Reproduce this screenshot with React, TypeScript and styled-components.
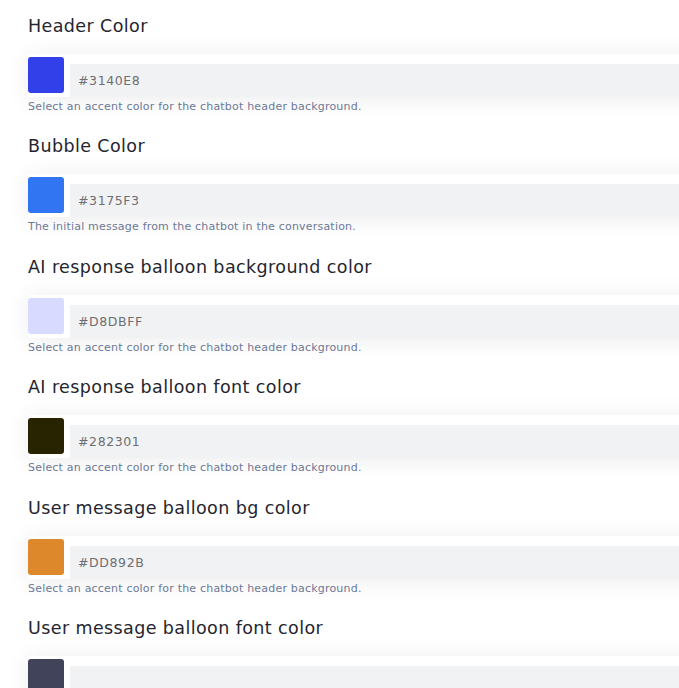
import React from "react";
import styled, { createGlobalStyle } from "styled-components";

const Global = createGlobalStyle`
  html, body { margin: 0; padding: 0; background: #ffffff; }
  body { overflow: hidden; font-family: "DejaVu Sans", "Open Sans", sans-serif; }
`;

const Page = styled.div`
  width: 679px;
  height: 688px;
  overflow: hidden;
  padding: 14px 0 0 28px;
  box-sizing: border-box;
  display: flex;
  flex-direction: column;
`;

const Field = styled.section`
  display: flex;
  flex-direction: column;
  margin-bottom: 19.4px;
`;

const Label = styled.div`
  font-size: 17.5px;
  line-height: 24px;
  letter-spacing: 0.4px;
  color: #25252f;
  font-weight: 400;
`;

const Card = styled.div`
  margin-top: 16px;
  height: 43px;
  width: calc(100% + 40px);
  background: #ffffff;
  box-shadow: 0 2px 24px rgba(0, 0, 0, 0.08);
  display: flex;
  align-items: flex-start;
  gap: 6px;
  padding-top: 3px;
  box-sizing: border-box;
`;

const Swatch = styled.div<{ $color: string }>`
  width: 36px;
  height: 36px;
  flex: none;
  border-radius: 3px;
  background: ${(p) => p.$color};
`;

const HexBox = styled.div`
  flex: 1;
  margin-top: 7px;
  height: 33px;
  background: #f1f2f4;
  display: flex;
  align-items: center;
  padding-left: 8px;
  font-size: 12.5px;
  letter-spacing: 0.6px;
  color: #6e6e73;
`;

const Help = styled.div`
  margin-top: 2px;
  font-size: 11px;
  line-height: 16px;
  letter-spacing: 0.2px;
  color: #6c7896;
`;

const fields = [
  { label: "Header Color", color: "#3140E8", hex: "#3140E8", help: "Select an accent color for the chatbot header background." },
  { label: "Bubble Color", color: "#3175F3", hex: "#3175F3", help: "The initial message from the chatbot in the conversation." },
  { label: "AI response balloon background color", color: "#D8DBFF", hex: "#D8DBFF", help: "Select an accent color for the chatbot header background." },
  { label: "AI response balloon font color", color: "#282301", hex: "#282301", help: "Select an accent color for the chatbot header background." },
  { label: "User message balloon bg color", color: "#DD892B", hex: "#DD892B", help: "Select an accent color for the chatbot header background." },
  { label: "User message balloon font color", color: "#41435A", hex: "", help: "Select an accent color for the chatbot header background." },
];

export default function App() {
  return (
    <>
      <Global />
      <Page>
        {fields.map((f) => (
          <Field key={f.label}>
            <Label>{f.label}</Label>
            <Card>
              <Swatch $color={f.color} />
              <HexBox>{f.hex}</HexBox>
            </Card>
            <Help>{f.help}</Help>
          </Field>
        ))}
      </Page>
    </>
  );
}
